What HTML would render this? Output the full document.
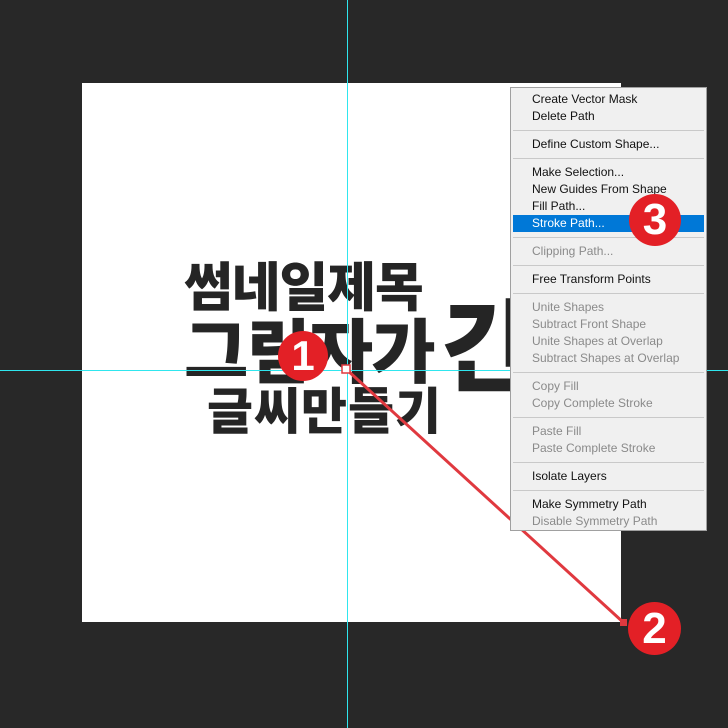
<!DOCTYPE html>
<html><head><meta charset="utf-8"><style>
*{margin:0;padding:0;box-sizing:border-box}
body{width:728px;height:728px;background:#282828;position:relative;overflow:hidden;font-family:"Liberation Sans","DejaVu Sans",sans-serif}
.abs{position:absolute}
.kr{position:absolute;font-family:"Noto Sans CJK KR","NanumGothic",sans-serif;font-weight:900;color:#252525;white-space:nowrap;line-height:1}
.menu{position:absolute;left:510px;top:87px;width:197px;height:444px;background:#f0f0f0;border:1px solid #a0a0a0}
.it{position:absolute;left:21px;font-size:12px;color:#111;white-space:nowrap;font-family:"Liberation Sans",sans-serif}
.dis{color:#8a8a8a}
.sep{position:absolute;left:2px;right:2px;height:1px;background:#c9c9c9}
.hl{position:absolute;left:2px;right:2px;top:127px;height:17px;background:#0078d7}
.c{position:absolute;border-radius:50%;background:#e32026;color:#fff;font-weight:900;text-align:center;font-family:"Liberation Sans",sans-serif}
</style></head><body>
<div class="abs" style="left:82px;top:83px;width:539px;height:539px;background:#fff"></div>
<div class="kr" style="left:184px;top:258px;font-size:53px;letter-spacing:-1px">썸네일제목</div>
<div class="kr" style="left:184px;top:313px;font-size:70px;letter-spacing:-2px">그림자가</div>
<div class="kr" style="left:440px;top:290px;font-size:100px">긴</div>
<div class="kr" style="left:207px;top:383px;font-size:50px;letter-spacing:1px">글씨만들기</div>
<div class="abs" style="left:346.5px;top:0;width:1.5px;height:728px;background:#2fe6ee"></div>
<div class="abs" style="left:0;top:370px;width:728px;height:1px;background:#2fe6ee"></div>
<svg class="abs" style="left:0;top:0" width="728" height="728"><line x1="346" y1="369" x2="624" y2="623" stroke="#e0393f" stroke-width="3"/><rect x="342" y="365" width="8" height="8" fill="#fff" stroke="#e0393f" stroke-width="1.5"/><rect x="620" y="619" width="7" height="7" fill="#e0393f"/></svg>
<div class="c" style="left:278px;top:331px;width:50px;height:50px;font-size:42px;line-height:50px">1</div>
<div class="menu">
<div class="hl"></div>
<div class="it" style="top:4px">Create Vector Mask</div>
<div class="it" style="top:21px">Delete Path</div>
<div class="sep" style="top:42px"></div>
<div class="it" style="top:49px">Define Custom Shape...</div>
<div class="sep" style="top:70px"></div>
<div class="it" style="top:77px">Make Selection...</div>
<div class="it" style="top:94px">New Guides From Shape</div>
<div class="it" style="top:111px">Fill Path...</div>
<div class="it" style="top:128px;color:#fff">Stroke Path...</div>
<div class="sep" style="top:149px"></div>
<div class="it dis" style="top:156px">Clipping Path...</div>
<div class="sep" style="top:177px"></div>
<div class="it" style="top:184px">Free Transform Points</div>
<div class="sep" style="top:205px"></div>
<div class="it dis" style="top:212px">Unite Shapes</div>
<div class="it dis" style="top:229px">Subtract Front Shape</div>
<div class="it dis" style="top:246px">Unite Shapes at Overlap</div>
<div class="it dis" style="top:263px">Subtract Shapes at Overlap</div>
<div class="sep" style="top:284px"></div>
<div class="it dis" style="top:291px">Copy Fill</div>
<div class="it dis" style="top:308px">Copy Complete Stroke</div>
<div class="sep" style="top:329px"></div>
<div class="it dis" style="top:336px">Paste Fill</div>
<div class="it dis" style="top:353px">Paste Complete Stroke</div>
<div class="sep" style="top:374px"></div>
<div class="it" style="top:381px">Isolate Layers</div>
<div class="sep" style="top:402px"></div>
<div class="it" style="top:409px">Make Symmetry Path</div>
<div class="it dis" style="top:426px">Disable Symmetry Path</div>
</div>
<div class="c" style="left:629px;top:194px;width:52px;height:52px;font-size:44px;line-height:52px">3</div>
<div class="c" style="left:628px;top:602px;width:53px;height:53px;font-size:44px;line-height:53px">2</div>
</body></html>
